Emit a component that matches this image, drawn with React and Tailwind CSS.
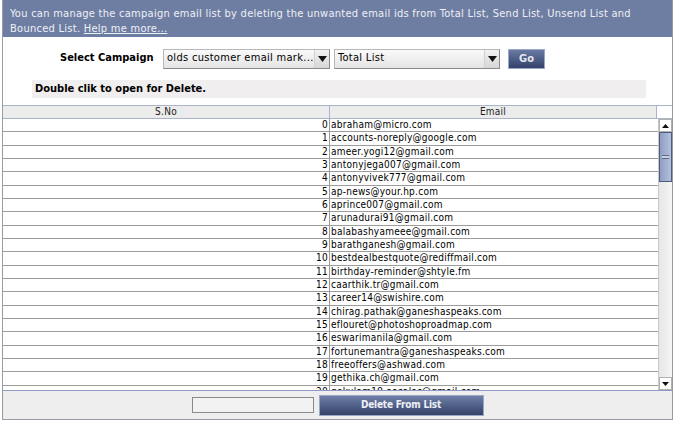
import React from "react";

const emails = [
  "abraham@micro.com",
  "accounts-noreply@google.com",
  "ameer.yogi12@gmail.com",
  "antonyjega007@gmail.com",
  "antonyvivek777@gmail.com",
  "ap-news@your.hp.com",
  "aprince007@gmail.com",
  "arunadurai91@gmail.com",
  "balabashyameee@gmail.com",
  "barathganesh@gmail.com",
  "bestdealbestquote@rediffmail.com",
  "birthday-reminder@shtyle.fm",
  "caarthik.tr@gmail.com",
  "career14@swishire.com",
  "chirag.pathak@ganeshaspeaks.com",
  "eflouret@photoshoproadmap.com",
  "eswarimanila@gmail.com",
  "fortunemantra@ganeshaspeaks.com",
  "freeoffers@ashwad.com",
  "gethika.ch@gmail.com",
  "gokulam19.aasalas@gmail.com",
  "gopinath.k@gmail.com",
];

const cond = "font-['DejaVu_Sans_Condensed','DejaVu_Sans',sans-serif]";

const Select = ({ value, width }) => (
  <div
    className={`flex items-center h-[20px] ${width} border border-[#b8b8b8] border-b-[#8a8a8a] border-r-[#8a8a8a] bg-gradient-to-b from-[#fafafa] to-[#e4e4e4]`}
  >
    <span className="flex-1 pl-[3px] text-[11px] tracking-[0.3px] text-black whitespace-nowrap overflow-hidden">
      {value}
    </span>
    <span className="flex items-center justify-center w-[15px] h-full border-l border-[#d0d0d0] bg-gradient-to-b from-[#f2f2f2] to-[#d6d6d6]">
      <svg width="9" height="6" viewBox="0 0 9 6">
        <path d="M0 0h9L4.5 6z" fill="#111" />
      </svg>
    </span>
  </div>
);

export default function App() {
  return (
    <div className={`w-[675px] h-[421px] bg-white ${cond} overflow-hidden`}>
      <div className="ml-[2px] w-[671px] h-[420px] flex flex-col border border-t-0 border-[#9a9aa6]">
        {/* Header note */}
        <div className="h-[37px] bg-[#6e7ea2] px-[7px] pt-[6px] text-[11px] leading-[15px] tracking-[0.27px] text-[#eef0f6]">
          You can manage the campaign email list by deleting the unwanted email ids from Total List, Send
          List, Unsend List and Bounced List. <span className="underline">Help me more...</span>
        </div>

        {/* Campaign selection */}
        <div className="flex items-center mt-[11px] h-[21px]">
          <span className="ml-[57px] w-[103px] text-[11px] font-bold text-black">Select Campaign</span>
          <Select value="olds customer email mark..." width="w-[167px]" />
          <div className="w-[4px]" />
          <Select value="Total List" width="w-[166px]" />
          <button className="ml-[8px] w-[37px] h-[20px] border border-[#9aa8c8] bg-gradient-to-b from-[#6a7aa2] to-[#34426a] text-[11px] font-bold text-[#e6e9f0] leading-none">
            Go
          </button>
        </div>

        {/* Info */}
        <div className="mt-[11px] ml-[29px] w-[614px] h-[18px] bg-[#f0eeee] flex items-center pl-[3px] text-[11px] font-bold text-black">
          Double clik to open for Delete.
        </div>

        {/* Table */}
        <div className="mt-[7px] flex flex-col h-[285px] border-t border-[#a9b4cc]">
          <div className="flex h-[13px] bg-[#ececec] border-b border-[#a9b4cc] text-[10px] leading-[12px] tracking-[0.25px] text-[#222]">
            <div className="w-[327px] text-center border-r border-[#a9b4cc]">S.No</div>
            <div className="w-[327px] text-center border-r border-[#a9b4cc]">Email</div>
            <div className="flex-1 bg-white" />
          </div>
          <div className="flex flex-1 min-h-0">
            <div className="flex-1 overflow-hidden">
              {emails.map((e, i) => (
                <div
                  key={e}
                  className="flex h-[13.33px] border-b border-[#9c9c9c] text-[10px] leading-[12px] tracking-[0.25px] text-black"
                >
                  <div className="w-[327px] text-right pr-[1px] border-r border-[#9c9c9c]">{i}</div>
                  <div className="flex-1 pl-[1px]">{e}</div>
                </div>
              ))}
            </div>
            {/* Scrollbar */}
            <div className="w-[14px] flex flex-col bg-gradient-to-r from-[#e6e6e6] to-[#f6f6f6] border-l border-[#c8c8c8]">
              <div className="h-[13px] flex items-center justify-center bg-white border border-[#b0b0b0]">
                <svg width="7" height="4" viewBox="0 0 7 4">
                  <path d="M0 4h7L3.5 0z" fill="#111" />
                </svg>
              </div>
              <div className="h-[50px] flex items-center justify-center bg-gradient-to-r from-[#8e9ec4] to-[#b4c0dc] border border-[#4e5c80]">
                <div className="w-[7px] h-[4px] border-y border-[#606a80] bg-[#c8d0e0]" />
              </div>
              <div className="flex-1" />
              <div className="h-[13px] flex items-center justify-center bg-white border border-[#b0b0b0]">
                <svg width="7" height="4" viewBox="0 0 7 4">
                  <path d="M0 0h7L3.5 4z" fill="#111" />
                </svg>
              </div>
            </div>
          </div>
        </div>

        {/* Bottom actions */}
        <div className="flex-1 flex items-center justify-center gap-[5px] bg-[#eeeeee] border-t border-[#8c9cc4]">
          <div className="w-[122px] h-[16px] border border-[#8a8a8a] bg-[#f2f2f2]" />
          <button className="w-[165px] h-[21px] border border-[#9aa8c8] bg-gradient-to-b from-[#6f7fa6] to-[#34426a] text-[10px] font-bold tracking-[-0.2px] text-[#eef0f6] leading-none">
            Delete From List
          </button>
        </div>
      </div>
    </div>
  );
}
